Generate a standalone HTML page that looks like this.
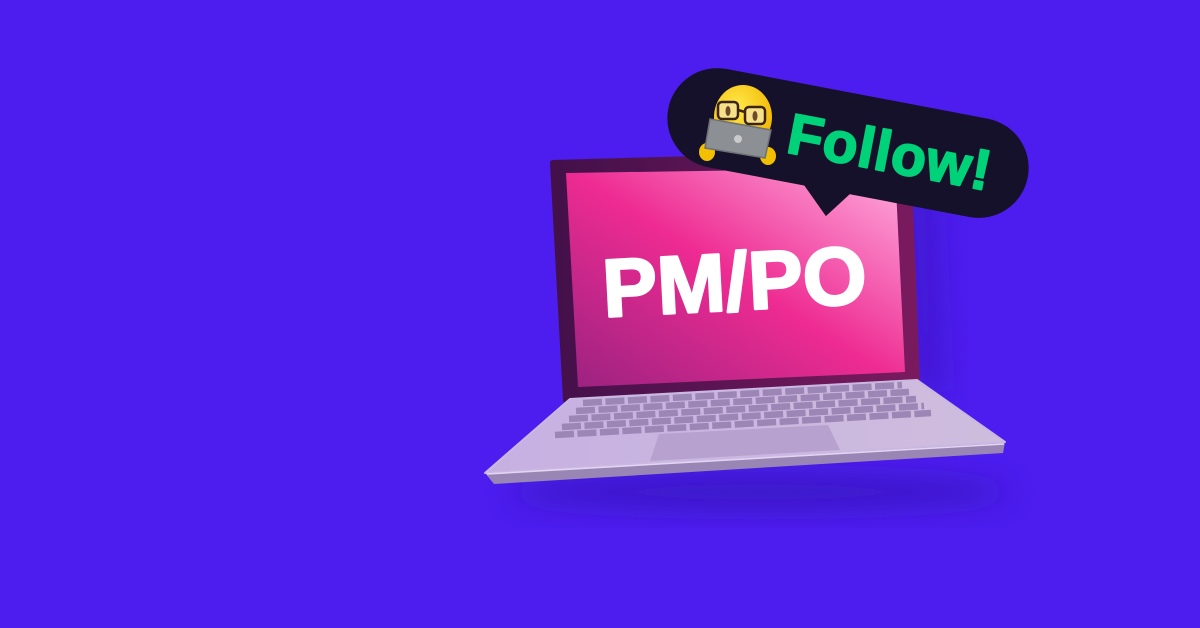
<!DOCTYPE html>
<html><head><meta charset="utf-8"><style>
html,body{margin:0;padding:0;background:#4c1dee;}
svg{display:block}
</style></head><body>
<svg width="1200" height="628" viewBox="0 0 1200 628" xmlns="http://www.w3.org/2000/svg">
<defs>
<linearGradient id="scr" x1="0" y1="1" x2="1" y2="0">
<stop offset="0" stop-color="#9a2280"/>
<stop offset="0.5" stop-color="#ee2b92"/>
<stop offset="1" stop-color="#ffb0e0"/>
</linearGradient>
<linearGradient id="lid" x1="0" y1="0" x2="1" y2="0">
<stop offset="0" stop-color="#43104a"/>
<stop offset="1" stop-color="#7a1a5e"/>
</linearGradient>
<linearGradient id="top" x1="0" y1="0" x2="1" y2="0">
<stop offset="0" stop-color="#c6b0e2"/>
<stop offset="1" stop-color="#cfbddd"/>
</linearGradient>
<filter id="blur" x="-50%" y="-50%" width="200%" height="200%"><feGaussianBlur stdDeviation="14"/></filter>
<radialGradient id="head" cx="0.4" cy="0.35" r="0.7">
<stop offset="0" stop-color="#ffe94a"/><stop offset="1" stop-color="#f2b500"/>
</radialGradient>
</defs>
<rect width="1200" height="628" fill="#4c1dee"/>
<ellipse cx="760" cy="492" rx="250" ry="18" fill="#3513b8" opacity="0.7" filter="url(#blur)"/>
<polygon points="900,170 935,175 945,390 915,395" fill="#3a14c0" opacity="0.6" filter="url(#blur)"/>
<polygon points="553,163 908,153 917,383 566,400" fill="url(#lid)" stroke="url(#lid)" stroke-width="6" stroke-linejoin="round"/>
<polygon points="566,173 895,168 905,372 578,387" fill="url(#scr)"/>
<text x="0" y="0" transform="translate(736,310) rotate(-3)" text-anchor="middle" font-family="Liberation Sans, sans-serif" font-weight="bold" font-size="82" fill="#fff" stroke="#fff" stroke-width="2.5" stroke-linejoin="round">PM/PO</text>
<polygon points="485,473 494,484 1003,453 1005,442" fill="#9a86b4"/>
<polygon points="485,473 570,399 917,380 1005,442" fill="url(#top)" stroke="#cbb8e2" stroke-width="2" stroke-linejoin="round"/>
<line x1="487" y1="474" x2="1004" y2="444" stroke="#e4d6f3" stroke-width="1.5"/>
<g stroke="#9b86b6" stroke-width="6.5" stroke-dasharray="19 3.5">
<line x1="583" y1="403" x2="902" y2="385"/>
<line x1="576" y1="411" x2="909" y2="392"/>
<line x1="569" y1="419" x2="916" y2="399"/>
<line x1="562" y1="427" x2="924" y2="406"/>
<line x1="555" y1="435" x2="931" y2="413"/>
</g>
<polygon points="659,434 828,425 840,450 650,461" fill="#b7a1cf"/>
<g transform="translate(848,143) rotate(10.8)">
<rect x="-183" y="-50" width="366" height="100" rx="50" fill="#16112b"/>
<polygon points="-40,45 15,45 -8,76" fill="#16112b"/>
</g>
<g>
<ellipse cx="743" cy="117" rx="29" ry="32" fill="url(#head)"/>
<ellipse cx="707" cy="152" rx="8" ry="9" fill="#f2c000"/>
<ellipse cx="768" cy="156" rx="8" ry="9" fill="#f2c000"/>
<g fill="none" stroke="#3b2410" stroke-width="2.5">
<rect x="718" y="102" width="20" height="17" rx="4" fill="#f7e08a"/>
<rect x="745" y="107" width="20" height="17" rx="4" fill="#f7e08a"/>
<line x1="738" y1="110" x2="745" y2="112"/>
</g>
<ellipse cx="728" cy="111" rx="2.5" ry="5" fill="#6b4a2a"/>
<ellipse cx="755" cy="116" rx="2.5" ry="5" fill="#6b4a2a"/>
<polygon points="710,119 771,130 765,158 705,148" fill="#8c8f93" stroke="#6d7075" stroke-width="1.5"/>
<circle cx="738" cy="139" r="4" fill="#c8cacc"/>
</g>
<text x="0" y="0" transform="translate(785,152) rotate(10.8)" font-family="Liberation Sans, sans-serif" font-weight="bold" font-size="57" fill="#00d27a" stroke="#00d27a" stroke-width="2" stroke-linejoin="round" letter-spacing="1">Follow!</text>
</svg>
</body></html>
